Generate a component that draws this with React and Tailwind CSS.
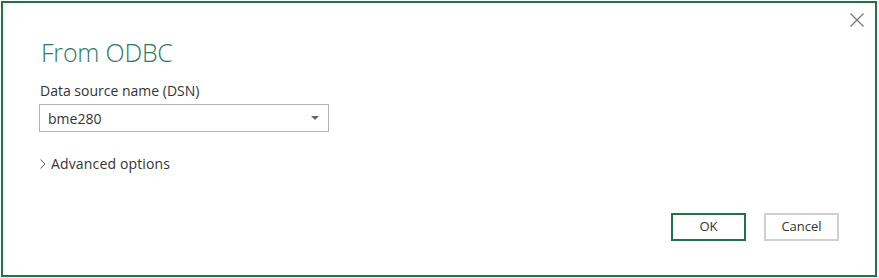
export default function App() {
  return (
    <div className="w-[879px] h-[278px] bg-white pl-px pt-px" style={{ fontFamily: '"Open Sans", "Noto Sans", sans-serif' }}>
      <div className="relative w-[876px] h-[276px] border-2 border-[#217346] bg-white">
        {/* close */}
        <button className="absolute right-[10px] top-[9px]">
          <svg width="16" height="16" viewBox="0 0 16 16">
            <path d="M1.5 1.5l13 13M14.5 1.5l-13 13" stroke="#777" strokeWidth="1.3" fill="none" />
          </svg>
        </button>

        <div className="pl-[36px] pt-[33px]">
          <h1 className="pl-[2px] text-[25px] font-light text-[#2c7d63] leading-[32px] tracking-[-0.2px]">From ODBC</h1>

          <div className="mt-[14px] pl-px text-[14px] leading-[18px] text-[#333]">Data source name (DSN)</div>
          <div className="mt-[4px] w-[290px] h-[28px] border border-[#b3b3b3] flex items-center justify-between pl-[8px] pr-[9px]">
            <span className="text-[14px] text-[#333]">bme280</span>
            <svg width="8" height="4" viewBox="0 0 8 4">
              <path d="M0 0h8L4 4z" fill="#666" />
            </svg>
          </div>

          <div className="mt-[21px] flex items-center text-[14px] tracking-[0.15px] text-[#333]">
            <svg width="12" height="12" viewBox="0 0 12 12">
              <path d="M1.5 1.5l4.5 4.5-4.5 4.5" stroke="#555" strokeWidth="1" fill="none" />
            </svg>
            <span>Advanced options</span>
          </div>
        </div>

        <div className="absolute right-[36px] bottom-[34px] flex gap-[18px]">
          <button className="w-[75px] h-[28px] border-2 border-[#217346] text-[13px] text-[#333] bg-white">OK</button>
          <button className="w-[75px] h-[28px] border-2 border-[#d0d0d0] text-[13px] text-[#333] bg-white">Cancel</button>
        </div>
      </div>
    </div>
  );
}
